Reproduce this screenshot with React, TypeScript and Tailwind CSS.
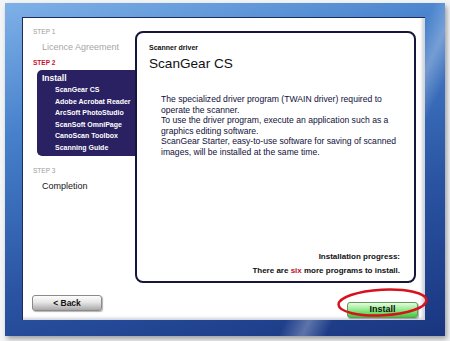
import React from 'react';

const programs = [
  'ScanGear CS',
  'Adobe Acrobat Reader',
  'ArcSoft PhotoStudio',
  'ScanSoft OmniPage',
  'CanoScan Toolbox',
  'Scanning Guide',
];

const StepLabel: React.FC<{ label: string; active?: boolean; className?: string }> = ({ label, active, className = '' }) => (
  <div
    className={`pl-[10px] text-[6.5px] leading-[10px] ${active ? 'font-bold text-[#c8102e]' : 'text-[#9c9c9c]'} ${className}`}
  >
    {label}
  </div>
);

export default function App() {
  return (
    <div className="w-[450px] h-[341px] bg-[#f3f4f6] pt-[3px] pl-[5px] font-['Liberation_Sans',Arial,sans-serif]">
      {/* blue window frame */}
      <div className="w-[440px] h-[333px] pt-[14px] pl-[17px] bg-[linear-gradient(115deg,transparent_72%,rgba(255,255,255,0.28)_76%,transparent_80%),linear-gradient(165deg,#7fb1e8_0%,#4680cb_30%,#2a54a2_65%,#1a3580_100%)] shadow-[2px_3px_5px_rgba(0,0,0,0.35)]">
        <div className="w-[403px] h-[303px] bg-white border-t border-l border-[#1b2b5e] shadow-[inset_-3px_-2px_3px_rgba(120,130,150,0.35)] flex flex-col pt-[9px]">
          <div className="flex">
            {/* step list */}
            <div className="w-[112px] flex flex-col">
              <StepLabel label="STEP 1" />
              <div className="pl-[19px] mt-[3px] text-[9px] leading-[14px] text-[#a6a6a6]">Licence Agreement</div>
              <StepLabel label="STEP 2" active className="mt-[4px]" />
              <div className="ml-[14px] mt-[2px] py-[2px] bg-[#2a2162] rounded-l-[5px] text-white font-bold">
                <div className="pl-[5px] text-[8.5px] leading-[12px]">Install</div>
                {programs.map((name) => (
                  <div key={name} className="pl-[18px] text-[7px] leading-[11.6px] whitespace-nowrap">
                    {name}
                  </div>
                ))}
              </div>
              <StepLabel label="STEP 3" className="mt-[10px]" />
              <div className="pl-[19px] mt-[3px] text-[9px] leading-[14px] text-[#141414]">Completion</div>
            </div>

            {/* program detail */}
            <div className="mt-[4px] w-[281px] h-[252px] border-2 border-[#16163c] rounded-[8px] flex flex-col">
              <div className="pl-[12px] pt-[10px] text-[7px] leading-[10px] font-bold text-[#111]">Scanner driver</div>
              <div className="pl-[12px] mt-[3px] text-[13.6px] leading-[16px] text-[#111]">ScanGear CS</div>
              <div className="pl-[24px] mt-[22px] text-[8.6px] leading-[10.5px] text-[#10103a] whitespace-nowrap">
                The specialized driver program (TWAIN driver) required to
                <br />
                operate the scanner.
                <br />
                To use the driver program, execute an application such as a
                <br />
                graphics editing software.
                <br />
                ScanGear Starter, easy-to-use software for saving of scanned
                <br />
                images, will be installed at the same time.
              </div>
              <div className="mt-auto pr-[14px] pb-[3px] text-right text-[8px] leading-[14px] font-bold text-[#111]">
                <div>Installation progress:</div>
                <div>
                  There are <span className="text-[#c0102a]">six</span> more programs to install.
                </div>
              </div>
            </div>
          </div>

          {/* navigation buttons */}
          <div className="mt-[12px] flex justify-between pl-[9px] pr-[7px]">
            <button className="w-[70px] h-[16px] rounded-[3px] border border-[#8a8a8a] bg-[linear-gradient(180deg,#fdfdfd_0%,#e6e6e6_45%,#a8a8a8_100%)] shadow-[1px_1px_1px_rgba(0,0,0,0.3)] text-[8.5px] font-bold text-[#111] leading-none">
              &lt; Back
            </button>
            <div className="relative">
              <button className="w-[71px] h-[16px] rounded-[3px] border border-[#5f9a5c] bg-[linear-gradient(180deg,#e6fbe2_0%,#98ec90_45%,#3fc83c_100%)] shadow-[1px_1px_1px_rgba(0,0,0,0.3)] text-[9px] font-bold text-[#111] leading-none">
                Install
              </button>
              <svg
                className="absolute -left-[10px] -top-[7px] w-[91px] h-[29px] pointer-events-none overflow-visible"
                viewBox="0 0 91 29"
              >
                <ellipse
                  cx="45.5"
                  cy="14.5"
                  rx="44"
                  ry="12.8"
                  fill="none"
                  stroke="#d8121c"
                  strokeWidth="2.6"
                  transform="rotate(-3 45.5 14.5)"
                />
              </svg>
            </div>
          </div>
        </div>
      </div>
    </div>
  );
}
